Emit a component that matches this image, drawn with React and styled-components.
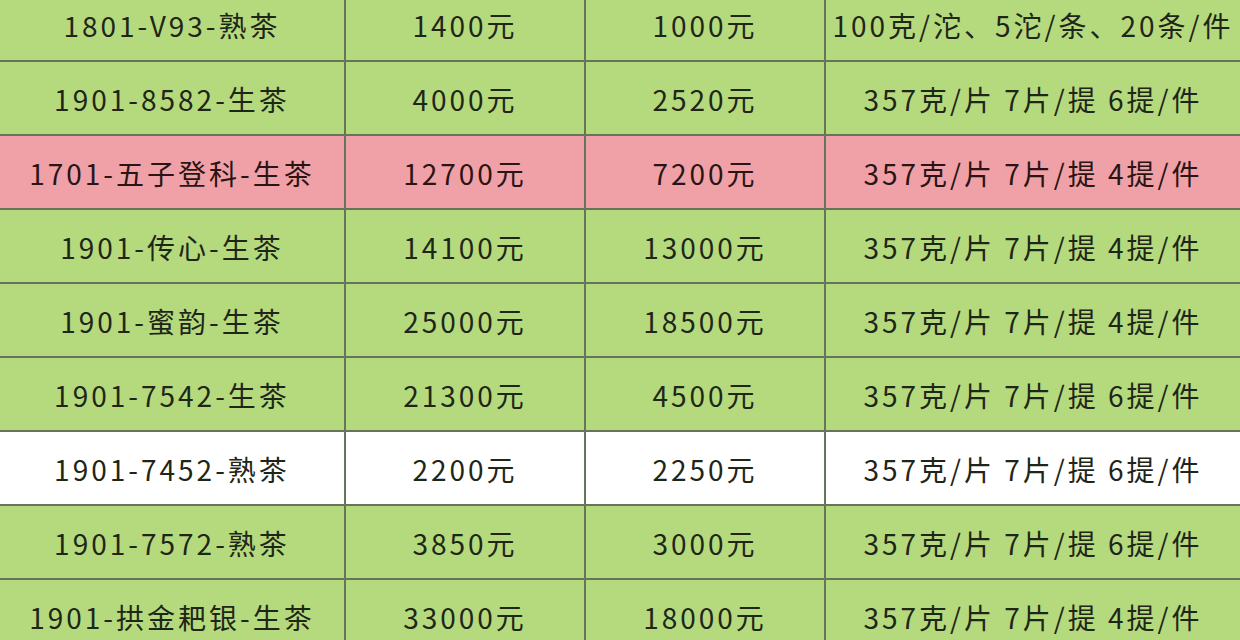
import React from "react";
import styled, { createGlobalStyle } from "styled-components";

const Global = createGlobalStyle`
  html, body { margin: 0; padding: 0; background: #b5da7d; overflow: hidden; }
  body { font-family: "Noto Sans CJK SC", "Noto Sans", sans-serif; }
`;

const Table = styled.div`
  display: grid;
  grid-template-columns: 346px 240px 240px 1fr;
  margin-top: -12px;
  width: 1240px;
`;

const bg = { green: "#b5da7d", pink: "#f0a1a7", white: "#ffffff" };

const Cell = styled.div`
  height: 74px;
  box-sizing: border-box;
  display: flex;
  align-items: center;
  justify-content: center;
  background: ${(p) => bg[p.$tone]};
  border-bottom: 2px solid #66745a;
  border-right: ${(p) => (p.$last ? "none" : "2px solid #66745a")};
  color: ${(p) => (p.$tone === "pink" ? "#2a1414" : "#1f2618")};
  font-size: 28px;
  letter-spacing: 3px;
  white-space: pre;
  padding-top: 1px;
`;

const rows = [
  ["1801-V93-熟茶", "1400元", "1000元", "100克/沱、5沱/条、20条/件", "green"],
  ["1901-8582-生茶", "4000元", "2520元", "357克/片 7片/提 6提/件", "green"],
  ["1701-五子登科-生茶", "12700元", "7200元", "357克/片 7片/提 4提/件", "pink"],
  ["1901-传心-生茶", "14100元", "13000元", "357克/片 7片/提 4提/件", "green"],
  ["1901-蜜韵-生茶", "25000元", "18500元", "357克/片 7片/提 4提/件", "green"],
  ["1901-7542-生茶", "21300元", "4500元", "357克/片 7片/提 6提/件", "green"],
  ["1901-7452-熟茶", "2200元", "2250元", "357克/片 7片/提 6提/件", "white"],
  ["1901-7572-熟茶", "3850元", "3000元", "357克/片 7片/提 6提/件", "green"],
  ["1901-拱金耙银-生茶", "33000元", "18000元", "357克/片 7片/提 4提/件", "green"],
];

export default function App() {
  return (
    <>
      <Global />
      <Table>
        {rows.map((r, i) =>
          r.slice(0, 4).map((t, j) => (
            <Cell key={i + "-" + j} $tone={r[4]} $last={j === 3}>
              {t}
            </Cell>
          ))
        )}
      </Table>
    </>
  );
}
